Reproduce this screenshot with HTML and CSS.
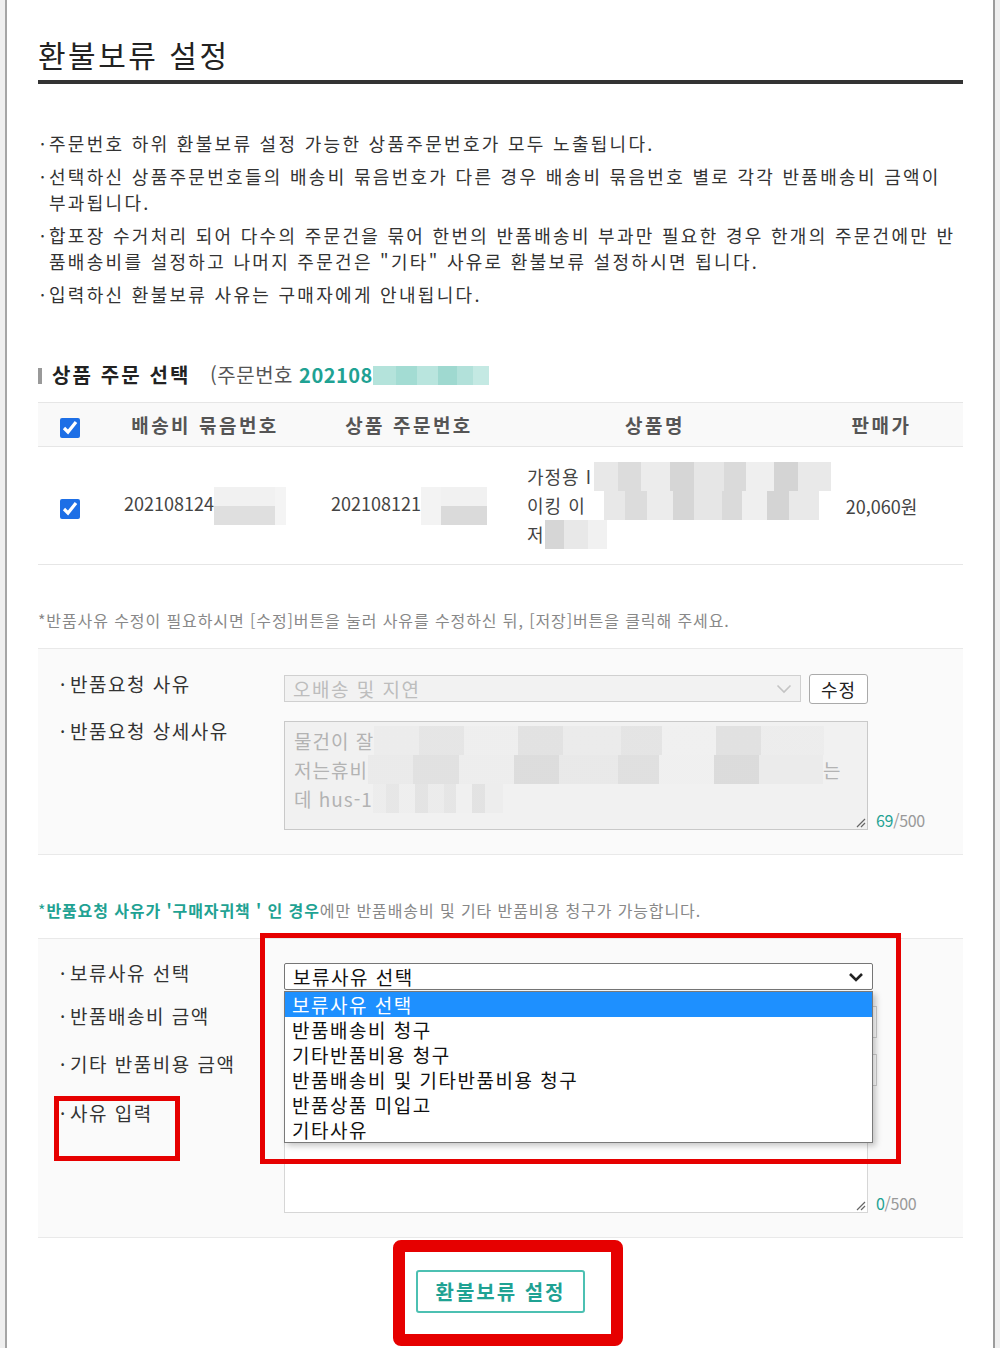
FILE: index.html
```html
<!DOCTYPE html>
<html lang="ko">
<head>
<meta charset="UTF-8">
<meta name="viewport" content="width=device-width, initial-scale=1.0">
<title>환불보류 설정</title>
<link rel="stylesheet" href="styles.css">
</head>
<body>

<div class="popup">
  <h2 class="title">환불보류 설정</h2>

  <ul class="guide">
    <li>주문번호 하위 환불보류 설정 가능한 상품주문번호가 모두 노출됩니다.</li>
    <li>선택하신 상품주문번호들의 배송비 묶음번호가 다른 경우 배송비 묶음번호 별로 각각 반품배송비 금액이<br>부과됩니다.</li>
    <li>합포장 수거처리 되어 다수의 주문건을 묶어 한번의 반품배송비 부과만 필요한 경우 한개의 주문건에만 반<br>품배송비를 설정하고 나머지 주문건은 "기타" 사유로 환불보류 설정하시면 됩니다.</li>
    <li>입력하신 환불보류 사유는 구매자에게 안내됩니다.</li>
  </ul>

  <h3 class="sec-title">상품 주문 선택 <span class="order-no">(주문번호 <b>202108</b><i class="blur-teal"></i></span></h3>

  <table class="order-table">
    <colgroup>
      <col style="width:64px"><col style="width:206px"><col style="width:202px"><col style="width:290px"><col style="width:163px">
    </colgroup>
    <thead>
      <tr>
        <th><input type="checkbox" checked></th>
        <th>배송비 묶음번호</th>
        <th>상품 주문번호</th>
        <th>상품명</th>
        <th>판매가</th>
      </tr>
    </thead>
    <tbody>
      <tr>
        <td><input type="checkbox" checked></td>
        <td>202108124<i class="blur-cell"></i></td>
        <td>202108121<i class="blur-cell b2"></i></td>
        <td class="prod-name">
          <div>가정용 I<i class="blur blur-w1"></i></div>
          <div>이킹 이<i class="blur blur-w2"></i></div>
          <div>저<i class="blur blur-w3"></i></div>
        </td>
        <td>20,060원</td>
      </tr>
    </tbody>
  </table>

  <p class="note">*반품사유 수정이 필요하시면 [수정]버튼을 눌러 사유를 수정하신 뒤, [저장]버튼을 클릭해 주세요.</p>

  <div class="form-box box-return">
    <div class="label">반품요청 사유</div>
    <div class="field">
      <div class="select disabled">
        <span>오배송 및 지연</span>
        <svg width="16" height="10" viewBox="0 0 16 10"><path d="M1.5 1.5 8 8l6.5-6.5" fill="none" stroke="#c4c4c4" stroke-width="1.6"/></svg>
      </div>
      <button class="btn-edit">수정</button>
    </div>

    <div class="label">반품요청 상세사유</div>
    <div class="field">
      <div class="textarea disabled">
        <div>물건이 잘<i class="blur blur-t1"></i></div>
        <div>저는휴비<i class="blur blur-t2"></i>는</div>
        <div>데 hus-1<i class="blur blur-t3"></i></div>
        <svg class="grip" width="12" height="12" viewBox="0 0 12 12"><path d="M11 3 3 11M11 7 7 11" stroke="#666" stroke-width="1.2"/></svg>
      </div>
      <span class="counter"><em>69</em>/500</span>
    </div>
  </div>

  <p class="note"><span class="em">*<strong>반품요청 사유가 '구매자귀책 ' 인 경우</strong></span>에만 반품배송비 및 기타 반품비용 청구가 가능합니다.</p>

  <div class="form-box box-hold">
    <div class="label">보류사유 선택</div>
    <div class="field">
      <div class="select-wrap">
        <div class="select open">
          <span>보류사유 선택</span>
          <svg width="16" height="10" viewBox="0 0 16 10"><path d="M2 2 8 8l6-6" fill="none" stroke="#222" stroke-width="2.6"/></svg>
        </div>
        <ul class="option-list">
          <li class="on">보류사유 선택</li>
          <li>반품배송비 청구</li>
          <li>기타반품비용 청구</li>
          <li>반품배송비 및 기타반품비용 청구</li>
          <li>반품상품 미입고</li>
          <li>기타사유</li>
        </ul>
      </div>
    </div>

    <div class="label">반품배송비 금액</div>
    <div class="field"><input class="text-input" type="text"></div>

    <div class="label">기타 반품비용 금액</div>
    <div class="field"><input class="text-input" type="text"></div>

    <div class="label label-reason">사유 입력</div>
    <div class="field field-reason">
      <div class="textarea">
        <svg class="grip" width="12" height="12" viewBox="0 0 12 12"><path d="M11 3 3 11M11 7 7 11" stroke="#666" stroke-width="1.2"/></svg>
      </div>
      <span class="counter"><em>0</em>/500</span>
    </div>
  </div>

  <div class="btn-area">
    <button class="btn-submit">환불보류 설정</button>
  </div>

  <!-- 캡처 표시용 빨간 박스 -->
  <div class="mark mark-select"></div>
  <div class="mark mark-label"></div>
  <div class="mark mark-btn"></div>
</div>

</body>
</html>
```

FILE: styles.css
```css
:root {
  --teal:#1fa293; --line:#e6e6e6; --box:#fafafa; --text:#333; --mark:#e60000;
}
*{box-sizing:border-box}
body{margin:0;background:#efefef;font-family:"Noto Sans CJK KR","Noto Sans",sans-serif;color:var(--text)}
.popup{position:relative;margin-left:5px;width:990px;min-height:1348px;background:#fff;border-left:2px solid #a5a5a5;border-right:2px solid #9c9c9c;padding:36px 30px 0 31px}

.title{margin:0;font-size:30px;font-weight:400;line-height:36px;letter-spacing:2.5px;color:#222;padding-bottom:8px;border-bottom:4px solid #333}

.guide{list-style:none;margin:46px 0 0;padding:0;font-size:18px;line-height:26px;letter-spacing:2.3px;color:#333}
.guide li{padding-left:11px;text-indent:-9px;white-space:nowrap}
.guide li+li{margin-top:7px}
.guide li::before{content:"·";display:inline-block;width:9px;text-indent:0;letter-spacing:0}

.sec-title{margin:55px 0 14px;font-size:20px;line-height:26px;font-weight:700;letter-spacing:2.1px;color:#222}
.sec-title::before{content:"";display:inline-block;width:4px;height:16px;background:#999;margin-right:10px;vertical-align:-1px}
.order-no{font-weight:400;color:#555;letter-spacing:.5px;margin-left:12px}
.order-no b{color:var(--teal)}
.blur-teal{display:inline-block;width:116px;height:19px;vertical-align:-2px;background:linear-gradient(90deg,#b4e3db 0 20%,#a3dcd3 20% 38%,#b9e5de 38% 56%,#9fd9d0 56% 72%,#b2e1da 72% 86%,#c4e9e3 86%)}

.order-table{width:100%;border-collapse:collapse;table-layout:fixed}
.order-table th{height:44px;background:#f9f9f9;border-top:1px solid var(--line);border-bottom:1px solid var(--line);font-size:19px;font-weight:700;letter-spacing:2.5px;color:#555;text-align:center;vertical-align:middle}
.order-table td{height:118px;border-bottom:1px solid var(--line);font-size:18px;color:#444;text-align:center;vertical-align:middle;white-space:nowrap}
.order-table input[type=checkbox]{width:20px;height:20px;margin:0;accent-color:#1d6fe6;vertical-align:middle}
.blur-cell{display:inline-block;width:72px;height:38px;vertical-align:middle;background:linear-gradient(90deg,transparent 85%,#f4f4f4 85%),linear-gradient(#f1f1f1 50%,#dfdfdf 50%)}
.blur-cell.b2{width:66px;background:linear-gradient(90deg,#f3f3f3 0 30%,transparent 30%),linear-gradient(#f1f1f1 50%,#dadada 50%)}
.order-table td.prod-name{text-align:left;padding-left:17px;line-height:29px;letter-spacing:1px}
.blur{display:inline-block;height:29px;vertical-align:top;background:linear-gradient(90deg,#e8e8e8 0 10%,#dcdcdc 10% 20%,#ececec 20% 32%,#d6d6d6 32% 42%,#e6e6e6 42% 55%,#dadada 55% 64%,#efefef 64% 76%,#d4d4d4 76% 86%,#e9e9e9 86%)}
.blur-w1{width:237px;margin-left:2px}
.blur-w2{width:215px;margin-left:18px}
.blur-w3{width:62px;background:linear-gradient(90deg,#d6d6d6 0 30%,#e8e8e8 30% 70%,#f1f1f1 70%)}

.note{margin:43px 0 16px;font-size:16px;line-height:24px;letter-spacing:.9px;color:#888}
.note .em{color:var(--teal)}
.note strong{font-weight:700}

.form-box{display:grid;grid-template-columns:224px auto;align-items:start;background:var(--box);border-top:1px solid #e9e9e9;border-bottom:1px solid #e9e9e9;padding:25px 0 24px 22px}
.box-return{row-gap:17px}
.box-hold{row-gap:16px;padding-top:24px}
.label{font-size:19px;line-height:20px;letter-spacing:1.5px;color:#333}
.label::before{content:"·";display:inline-block;width:10px;letter-spacing:0}
.label-reason{margin-top:1px}
.field{display:flex;align-items:flex-start;gap:8px}
.field-reason{margin-top:1px;align-items:flex-end}
.box-return .field:last-child{align-items:flex-end}

.select{display:flex;align-items:center;justify-content:space-between;height:27px;padding:0 8px;font-size:19px;letter-spacing:1.5px;background:#fff;border:1px solid #767676}
.select.disabled{width:517px;margin-top:1px;background:#f2f2f2;border-color:#d0d0d0;color:#bdbdbd}
.select.open{width:589px;color:#111;border-radius:2px}
.select svg{flex:none}

.btn-edit{width:59px;height:30px;padding:0;font:18px "Noto Sans CJK KR",sans-serif;letter-spacing:1px;color:#222;background:#fff;border:1px solid #aaa;border-radius:3px}

.textarea{position:relative;width:584px;height:109px;padding:4px 9px;font-size:19px;line-height:29px;letter-spacing:1px;background:#fff;border:1px solid #d6d6d6;white-space:nowrap;overflow:hidden}
.textarea.disabled{background:#f1f1f1;border-color:#c9c9c9;color:#b3b3b3}
.field-reason .textarea{height:110px}
.blur-t1{width:450px;opacity:.55}
.blur-t2{width:455px;opacity:.75}
.blur-t3{width:130px;opacity:.5}
.grip{position:absolute;right:1px;bottom:1px}
.counter{font-size:16px;line-height:20px;color:#999;letter-spacing:-.3px}
.counter em{font-style:normal;color:var(--teal)}

.select-wrap{position:relative}
.option-list{position:absolute;z-index:2;top:28px;left:0;width:589px;margin:0;padding:0;list-style:none;background:#fff;border:1px solid #7a7a7a;box-shadow:3px 3px 6px rgba(0,0,0,.22)}
.option-list li{height:25px;line-height:25px;padding-left:7px;font-size:19px;letter-spacing:1.5px;color:#111}
.option-list li.on{background:#1e90ff;color:#fff}

.text-input{width:593px;height:32px;border:1px solid #cfcfcf;background:#fff}

.btn-area{text-align:center;padding:32px 0 0}
.btn-submit{width:169px;height:43px;padding:0;font:700 20px "Noto Sans CJK KR",sans-serif;letter-spacing:2px;color:var(--teal);background:#fff;border:2px solid #4cc0b2;border-radius:3px}

.mark{position:absolute;z-index:3;border:5px solid var(--mark)}
.mark-select{left:253px;top:933px;width:641px;height:231px}
.mark-label{left:47px;top:1096px;width:126px;height:65px}
.mark-btn{left:386px;top:1240px;width:230px;height:106px;border-width:12px;border-radius:8px}
```
